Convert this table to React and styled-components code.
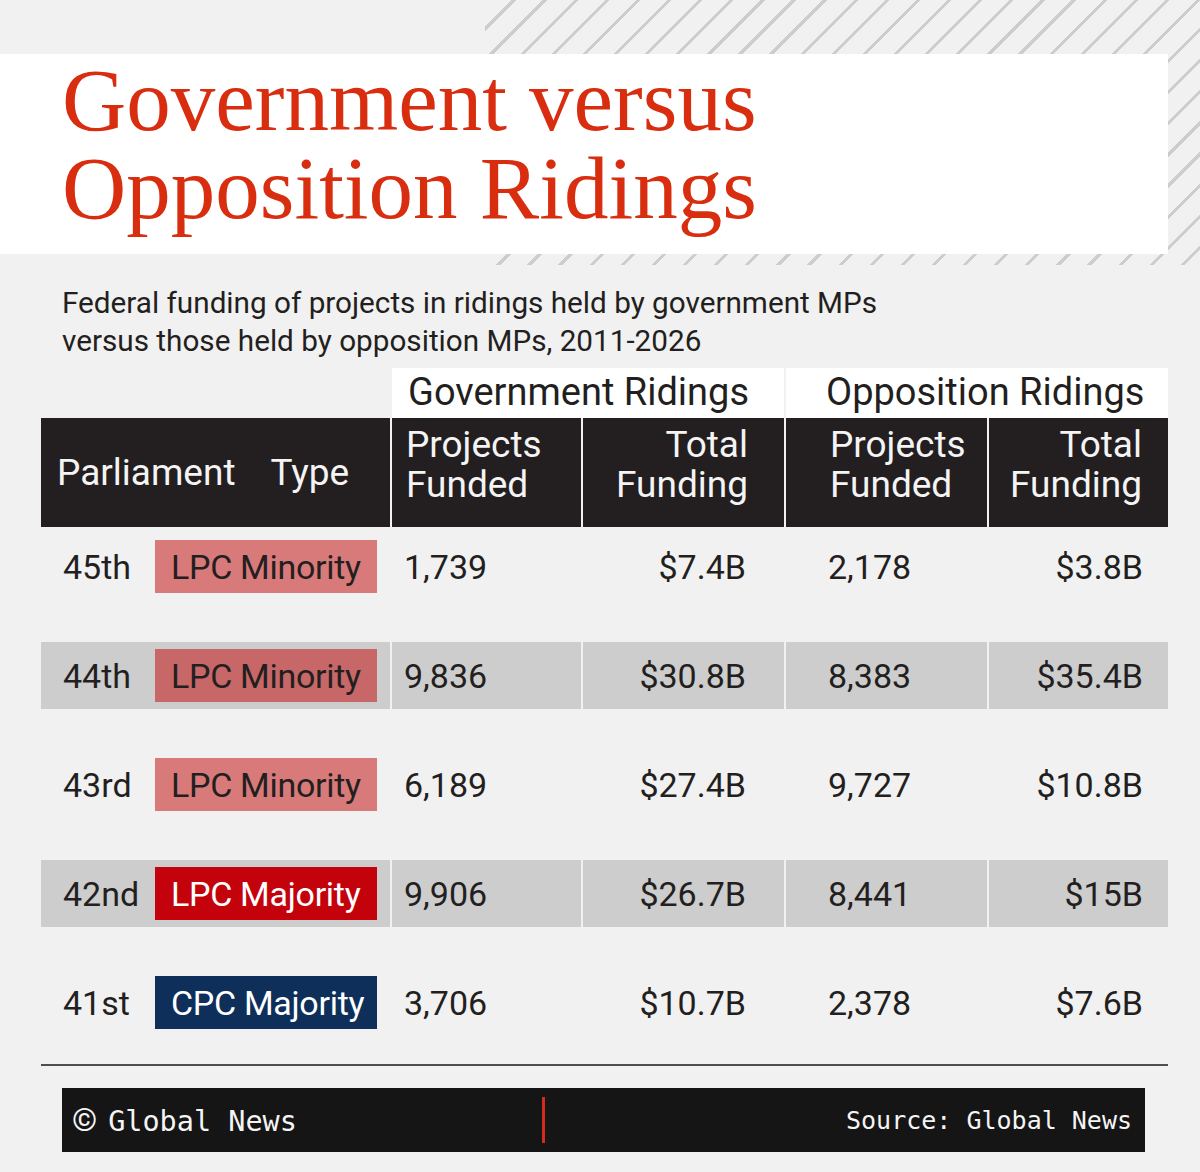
import React from "react";
import styled, { createGlobalStyle } from "styled-components";

const Global = createGlobalStyle`
  html, body { margin: 0; padding: 0; background: #f1f1f1; }
  body { font-family: Roboto, "Noto Sans", sans-serif; color: #231f20; }
`;

const Page = styled.div`
  width: 1200px;
  height: 1172px;
  background: #f1f1f1;
  overflow: hidden;
  display: flex;
  flex-direction: column;
`;

const Masthead = styled.header`
  position: relative;
  padding-top: 54px;
  &::before {
    content: "";
    position: absolute;
    left: 485px;
    top: 0;
    width: 715px;
    height: 265px;
    background: repeating-linear-gradient(
      135deg,
      #f1f1f1 0px,
      #f1f1f1 19px,
      #cdcdcd 19px,
      #cdcdcd 22px
    );
  }
`;

const TitleBox = styled.div`
  position: relative;
  width: 1106px;
  height: 198px;
  padding: 2px 0 0 62px;
  background: #ffffff;
`;

const Title = styled.h1`
  margin: 0;
  font-family: "Liberation Serif", "DejaVu Serif", serif;
  font-weight: 400;
  font-size: 89px;
  line-height: 88px;
  color: #d92d10;
`;

const TitleLine = styled.span`
  display: block;
`;

const Subtitle = styled.p`
  margin: 30px 0 0 62px;
  font-size: 29.7px;
  line-height: 38px;
  color: #231f20;
`;

const COLS = "349px 189px 201px 201px 179px";

const Table = styled.section`
  margin: 8px 0 0 41px;
  width: 1127px;
  display: flex;
  flex-direction: column;
`;

const GroupRow = styled.div`
  display: grid;
  grid-template-columns: ${COLS};
  column-gap: 2px;
  height: 50px;
`;

const GroupCell = styled.div`
  grid-column: ${(p) => p.$span};
  background: #ffffff;
  font-size: 38px;
  line-height: 48px;
  padding-left: ${(p) => p.$pl}px;
`;

const HeadRow = styled.div`
  display: grid;
  grid-template-columns: ${COLS};
  column-gap: 2px;
  height: 109px;
  margin-bottom: 6px;
`;

const HeadCell = styled.div`
  background: #231f20;
  color: #f4f4f4;
  font-size: 37px;
  line-height: 40px;
  text-align: ${(p) => p.$align};
  padding: 7px ${(p) => p.$pr || 0}px 0 ${(p) => p.$pl || 0}px;
`;

const HeadFirst = styled.div`
  background: #231f20;
  color: #f4f4f4;
  font-size: 37px;
  line-height: 40px;
  display: flex;
  align-items: center;
  gap: 35px;
  padding-left: 16px;
`;

const Rows = styled.div`
  display: flex;
  flex-direction: column;
  gap: 42px;
`;

const Row = styled.div`
  display: grid;
  grid-template-columns: ${COLS};
  column-gap: 2px;
  height: 67px;
`;

const FirstCell = styled.div`
  background: ${(p) => (p.$shaded ? "#cdcdcd" : "transparent")};
  display: flex;
  align-items: center;
  padding-left: 22px;
`;

const Ordinal = styled.span`
  width: 92px;
  font-size: 34px;
`;

const Badge = styled.span`
  box-sizing: border-box;
  width: 222px;
  height: 53px;
  padding-left: 16px;
  display: flex;
  align-items: center;
  font-size: 34px;
  letter-spacing: -0.3px;
  background: ${(p) => p.$bg};
  color: ${(p) => p.$fg};
`;

const NumCell = styled.div`
  background: ${(p) => (p.$shaded ? "#cdcdcd" : "transparent")};
  display: flex;
  align-items: center;
  justify-content: ${(p) => (p.$align === "right" ? "flex-end" : "flex-start")};
  padding: 0 ${(p) => p.$pr || 0}px 0 ${(p) => p.$pl || 0}px;
  font-size: 34px;
`;

const Divider = styled.hr`
  margin: 28px 0 0 41px;
  width: 1127px;
  height: 2px;
  border: 0;
  background: #4d4d52;
`;

const Footer = styled.footer`
  margin: 22px 0 0 62px;
  width: 1083px;
  height: 64px;
  background: #151515;
  color: #f4f4f4;
  display: grid;
  grid-template-columns: 480px 3px 1fr;
  align-items: center;
  font-family: "DejaVu Sans Mono", "Liberation Mono", monospace;
`;

const Credit = styled.span`
  padding-left: 10px;
  font-size: 28.5px;
`;

const Copy = styled.span`
  font-family: Roboto, sans-serif;
  font-size: 32px;
  margin-right: 11px;
`;

const RedBar = styled.span`
  width: 3px;
  height: 46px;
  background: #d52b1e;
`;

const Source = styled.span`
  justify-self: end;
  padding-right: 13px;
  font-size: 25px;
`;

const BADGES = {
  minLight: { bg: "#d97a7a", fg: "#231f20" },
  minDark: { bg: "#c86767", fg: "#231f20" },
  maj: { bg: "#c4020b", fg: "#ffffff" },
  cpc: { bg: "#0d2f5a", fg: "#ffffff" },
};

const rows = [
  { ord: "45th", type: "LPC Minority", badge: "minLight", shaded: false, gp: "1,739", gf: "$7.4B", op: "2,178", of: "$3.8B" },
  { ord: "44th", type: "LPC Minority", badge: "minDark", shaded: true, gp: "9,836", gf: "$30.8B", op: "8,383", of: "$35.4B" },
  { ord: "43rd", type: "LPC Minority", badge: "minLight", shaded: false, gp: "6,189", gf: "$27.4B", op: "9,727", of: "$10.8B" },
  { ord: "42nd", type: "LPC Majority", badge: "maj", shaded: true, gp: "9,906", gf: "$26.7B", op: "8,441", of: "$15B" },
  { ord: "41st", type: "CPC Majority", badge: "cpc", shaded: false, gp: "3,706", gf: "$10.7B", op: "2,378", of: "$7.6B" },
];

export default function App() {
  return (
    <Page>
      <Global />
      <Masthead>
        <TitleBox>
          <Title>
            <TitleLine>Government versus</TitleLine>
            <TitleLine>Opposition Ridings</TitleLine>
          </Title>
        </TitleBox>
      </Masthead>
      <Subtitle>
        Federal funding of projects in ridings held by government MPs
        <br />
        versus those held by opposition MPs, 2011-2026
      </Subtitle>
      <Table>
        <GroupRow>
          <GroupCell $span="2 / 4" $pl={16}>Government Ridings</GroupCell>
          <GroupCell $span="4 / 6" $pl={40}>Opposition Ridings</GroupCell>
        </GroupRow>
        <HeadRow>
          <HeadFirst>
            <span>Parliament</span>
            <span>Type</span>
          </HeadFirst>
          <HeadCell $align="left" $pl={14}>Projects<br />Funded</HeadCell>
          <HeadCell $align="right" $pr={36}>Total<br />Funding</HeadCell>
          <HeadCell $align="left" $pl={44}>Projects<br />Funded</HeadCell>
          <HeadCell $align="right" $pr={26}>Total<br />Funding</HeadCell>
        </HeadRow>
        <Rows>
          {rows.map((r) => (
            <Row key={r.ord}>
              <FirstCell $shaded={r.shaded}>
                <Ordinal>{r.ord}</Ordinal>
                <Badge $bg={BADGES[r.badge].bg} $fg={BADGES[r.badge].fg}>{r.type}</Badge>
              </FirstCell>
              <NumCell $shaded={r.shaded} $pl={12}>{r.gp}</NumCell>
              <NumCell $shaded={r.shaded} $align="right" $pr={38}>{r.gf}</NumCell>
              <NumCell $shaded={r.shaded} $pl={42}>{r.op}</NumCell>
              <NumCell $shaded={r.shaded} $align="right" $pr={25}>{r.of}</NumCell>
            </Row>
          ))}
        </Rows>
      </Table>
      <Divider />
      <Footer>
        <Credit><Copy>©</Copy>Global News</Credit>
        <RedBar />
        <Source>Source: Global News</Source>
      </Footer>
    </Page>
  );
}
